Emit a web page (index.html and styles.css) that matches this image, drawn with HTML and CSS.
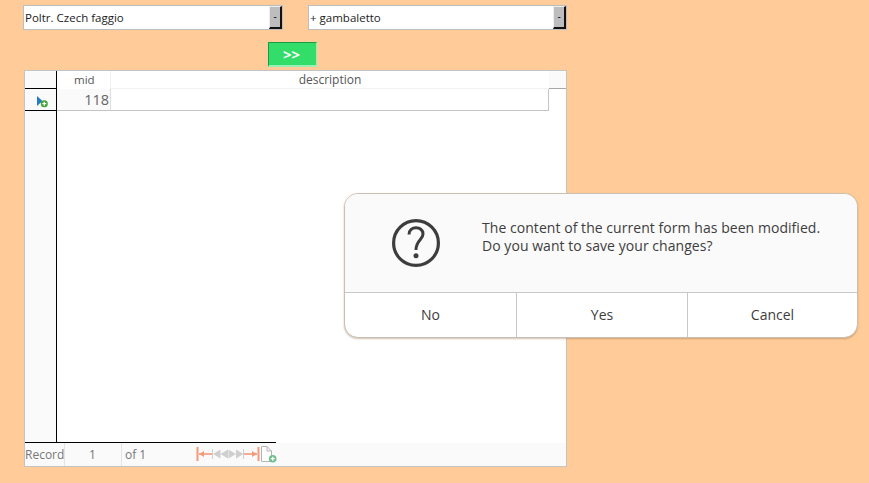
FILE: index.html
```html
<!DOCTYPE html>
<html lang="en">
<head>
    <meta charset="UTF-8">
    <meta name="viewport" content="width=device-width, initial-scale=1.0">
    <title>Form</title>
    <link rel="stylesheet" href="styles.css">
</head>
<body>
    <div class="filters">
        <div class="combo combo-first">
            <span class="combo-text">Poltr. Czech faggio</span>
            <span class="combo-btn">-</span>
        </div>
        <div class="combo combo-second">
            <span class="combo-text">+ gambaletto</span>
            <span class="combo-btn">-</span>
        </div>
    </div>

    <button class="go">&gt;&gt;</button>

    <div class="grid">
        <div class="grid-main">
            <div class="handles">
                <div class="handle-head"></div>
                <div class="handle-row">
                    <svg width="16" height="14" viewBox="0 0 16 14">
                        <path d="M1 0 L6.500 5 L1 10 Z" fill="#2a78c8"/>
                        <circle cx="8.300" cy="7.700" r="3.500" fill="#3aa52e"/>
                        <path d="M6.300 7.700 H10.300 M8.300 5.700 V9.700" stroke="#fff" stroke-width="1.300"/>
                    </svg>
                </div>
            </div>
            <div class="table">
                <div class="table-head">
                    <div class="col-mid">mid</div>
                    <div class="col-desc">description</div>
                    <div class="col-rest"></div>
                </div>
                <div class="table-row">
                    <div class="cell-mid">118</div>
                    <div class="cell-desc"></div>
                </div>
            </div>
        </div>
        <div class="nav">
            <span class="nav-label">Record</span>
            <span class="nav-num">1</span>
            <span class="nav-of">of 1</span>
            <svg class="nav-icons" width="82" height="19" viewBox="0 0 82 19">
                <path d="M1.500 2 V16" stroke="#f4997a" stroke-width="2"/>
                <path d="M3 9 H16" stroke="#f4997a" stroke-width="1.600"/>
                <path d="M3 9 L8 6 V12 Z" fill="#f4997a"/>
                <path d="M16.500 4 V14" stroke="#cfcfcf"/>
                <path d="M17 9 L24.500 4.500 V13.500 Z M24.500 9 L32 4.500 V13.500 Z" fill="#cfcfcf"/>
                <path d="M32.500 4.500 L40 9 L32.500 13.500 Z M40 4.500 L47.500 9 L40 13.500 Z" fill="#cfcfcf"/>
                <path d="M47.500 4 V14" stroke="#cfcfcf"/>
                <path d="M48 9 H61" stroke="#f4997a" stroke-width="1.600"/>
                <path d="M61 9 L56 6 V12 Z" fill="#f4997a"/>
                <path d="M62.500 2 V16" stroke="#f4997a" stroke-width="2"/>
                <path d="M65.500 1.500 H71 L75.500 6 V16.500 H65.500 Z M71 1.500 V6 H75.500" fill="#fff" stroke="#b5b5b5"/>
                <circle cx="76.700" cy="13.700" r="3.800" fill="#6fbf8a"/>
                <path d="M74.700 13.700 H78.700 M76.700 11.700 V15.700" stroke="#fff" stroke-width="1.300"/>
            </svg>
        </div>
    </div>

    <div class="dialog">
        <div class="dialog-body">
            <svg class="dialog-icon" width="48" height="48" viewBox="0 0 48 48">
                <circle cx="24" cy="24" r="22.400" fill="none" stroke="#3d3d3d" stroke-width="3.200"/>
                <path d="M17 15.500 C17 6.500 31 6.500 31 15 C31 21 24 21 24 31" fill="none" stroke="#3d3d3d" stroke-width="3"/>
                <circle cx="24" cy="36.700" r="2.500" fill="#3d3d3d"/>
            </svg>
            <p class="dialog-text">The content of the current form has been modified.<br>Do you want to save your changes?</p>
        </div>
        <div class="dialog-buttons">
            <div class="dialog-btn btn-no">No</div>
            <div class="dialog-btn btn-yes">Yes</div>
            <div class="dialog-btn">Cancel</div>
        </div>
    </div>
</body>
</html>
```

FILE: styles.css
```css
body {
    margin: 0;
    height: 483px;
    overflow: hidden;
    background-color: #ffcc99;
    font-family: "Open Sans", "Noto Sans", sans-serif;
    color: #3d3d3d;
}
.filters {
    display: flex;
    padding: 5px 0 0 23px;
    gap: 25px;
}
.combo {
    display: flex;
    align-items: center;
    justify-content: space-between;
    box-sizing: border-box;
    height: 25px;
    background-color: white;
    border: 1px solid #bdbdbd;
    font-size: 11.5px;
    color: #1c1c1c;
}
.combo-first {
    width: 260px;
}
.combo-second {
    width: 259px;
}
.combo-text {
    padding-left: 1px;
}
.combo-btn {
    box-sizing: border-box;
    width: 13px;
    height: 23px;
    background-color: #bdbdbd;
    border-top: 1px solid #eee;
    border-left: 1px solid #eee;
    border-right: 2px solid #111;
    border-bottom: 2px solid #111;
    text-align: center;
    line-height: 18px;
    font-size: 10px;
    color: #000;
}
.go {
    display: block;
    box-sizing: border-box;
    width: 49px;
    height: 25px;
    margin: 12px 0 3px 268px;
    padding: 0 2px 1px 0;
    background-color: #33dd6a;
    color: white;
    border-top: 1px solid #1c9a3f;
    border-left: 1px solid #1c9a3f;
    border-right: 1px solid #9af0b4;
    border-bottom: 2px solid #9af0b4;
    font-family: "Open Sans", sans-serif;
    font-size: 15px;
    font-weight: bold;
}
.grid {
    box-sizing: border-box;
    width: 543px;
    height: 397px;
    margin-left: 24px;
    background-color: white;
    border: 1px solid #c4c4c4;
    display: flex;
    flex-direction: column;
}
.grid-main {
    flex: 1;
    display: flex;
}
.handles {
    box-sizing: border-box;
    width: 32px;
    background-color: #fafafa;
    border-right: 1px solid #000;
}
.handle-head {
    box-sizing: border-box;
    height: 18px;
    border-bottom: 1px solid #000;
}
.handle-row {
    box-sizing: border-box;
    height: 22px;
    border-bottom: 1px solid #000;
    padding: 7px 0 0 11px;
}
.handle-row svg {
    display: block;
}
.table {
    flex: 1;
}
.table-head {
    display: flex;
    height: 18px;
    font-size: 12px;
    line-height: 18px;
    color: #555;
}
.col-mid {
    box-sizing: border-box;
    width: 54px;
    padding-left: 17px;
    font-size: 11.5px;
    border-right: 1px solid #f0f0f0;
}
.col-desc {
    width: 438px;
    text-align: center;
    border-bottom: 1px solid #f2f2f2;
}
.col-rest {
    flex: 1;
    background-color: #fafafa;
    border-bottom: 1px solid #a8a8a8;
}
.table-row {
    box-sizing: border-box;
    display: flex;
    width: 492px;
    height: 22px;
    border-bottom: 1px solid #c4c4c4;
    border-right: 1px solid #c4c4c4;
}
.cell-mid {
    box-sizing: border-box;
    width: 54px;
    padding-right: 1px;
    background-color: #fafafa;
    border-right: 1px solid #dedede;
    text-align: right;
    font-size: 14.5px;
    line-height: 21px;
    color: #666;
}
.cell-desc {
    flex: 1;
}
.nav {
    display: flex;
    align-items: center;
    height: 23px;
    background-color: #fafafa;
    font-size: 12px;
    color: #777;
    position: relative;
}
.nav::before {
    content: "";
    position: absolute;
    left: 0;
    top: -1px;
    width: 251px;
    height: 1px;
    background-color: #000;
}
.nav-label {
    box-sizing: border-box;
    width: 40px;
    line-height: 23px;
    border-right: 1px solid #e4e4e4;
}
.nav-num {
    box-sizing: border-box;
    width: 57px;
    padding-right: 1px;
    line-height: 23px;
    text-align: center;
    background-color: #fafafa;
    border-right: 1px solid #e4e4e4;
}
.nav-of {
    width: 71px;
    padding-left: 3px;
}
.nav-icons {
    display: block;
}
.dialog {
    position: absolute;
    left: 344px;
    top: 193px;
    box-sizing: border-box;
    width: 514px;
    height: 145px;
    background-color: white;
    border: 1px solid #c9c0b5;
    border-radius: 14px;
    box-shadow: 0 1px 2px rgba(120, 80, 40, 0.35);
    overflow: hidden;
    font-size: 14px;
}
.dialog-body {
    display: flex;
    height: 98px;
    background-color: #fafafa;
    border-bottom: 1px solid #c8c8c8;
}
.dialog-icon {
    margin: 25px 0 0 47px;
}
.dialog-text {
    margin: 25px 0 0 42px;
    line-height: 18px;
    letter-spacing: 0.05px;
    white-space: nowrap;
}
.dialog-buttons {
    display: flex;
    height: 45px;
}
.dialog-btn {
    flex: 1;
    text-align: center;
    line-height: 44px;
    border-right: 1px solid #c8c8c8;
}
.btn-no {
    flex: none;
    width: 171px;
}
.btn-yes {
    flex: none;
    width: 170px;
}
.dialog-btn:last-child {
    border-right: 0;
}
```
